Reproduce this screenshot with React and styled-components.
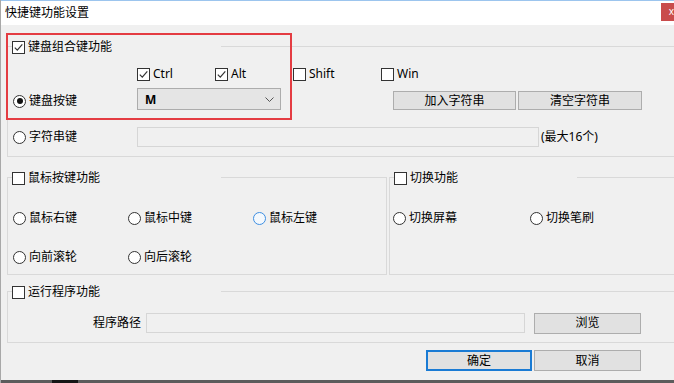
import React from "react";
import styled, { createGlobalStyle } from "styled-components";

const GlobalStyle = createGlobalStyle`
  html, body {
    margin: 0;
    padding: 0;
    background: #f0f0f0;
  }
  body {
    width: 674px;
    height: 383px;
    overflow: hidden;
    font-family: "Noto Sans", "Noto Sans CJK SC", sans-serif;
  }
`;

export default function App() {
	return (
		<>
			<GlobalStyle />
			<Window>
				<TitleBar>
					<Title>快捷键功能设置</Title>
					<CloseButton>x</CloseButton>
				</TitleBar>
				<Body>
					<Group $w="680px" $pad="0 0 9px 5px">
						<Legend $w="209px">
							<Check checked>键盘组合键功能</Check>
						</Legend>
						<Row $mt="17px" $h="20px">
							<Cell $w="124px" />
							<Cell $w="78px">
								<Check checked>Ctrl</Check>
							</Cell>
							<Cell $w="78px">
								<Check checked>Alt</Check>
							</Cell>
							<Cell $w="88px">
								<Check>Shift</Check>
							</Cell>
							<Cell>
								<Check>Win</Check>
							</Cell>
						</Row>
						<Row $mt="4px" $h="22px">
							<Cell $w="124px" $down>
								<Radio checked>键盘按键</Radio>
							</Cell>
							<Combo>
								<span>M</span>
								<svg width="9" height="5" viewBox="0 0 9 5">
									<polyline points="0.5,0.5 4.5,4.5 8.5,0.5" fill="none" stroke="#555" strokeWidth="1" />
								</svg>
							</Combo>
							<Button $w="123px" $h="19px" $ml="112px" $bottom>
								加入字符串
							</Button>
							<Button $w="124px" $h="19px" $ml="2px" $bottom>
								清空字符串
							</Button>
						</Row>
						<Row $mt="17px" $h="20px">
							<Cell $w="124px">
								<Radio>字符串键</Radio>
							</Cell>
							<TextField $w="402px" />
							<Note>(最大16个)</Note>
						</Row>
					</Group>

					<GroupRow>
						<Group $w="380px" $pad="0 0 7px 5px">
							<Legend $w="209px">
								<Check>鼠标按键功能</Check>
							</Legend>
							<Row $mt="30px" $h="20px">
								<Cell $w="115px">
									<Radio>鼠标右键</Radio>
								</Cell>
								<Cell $w="125px">
									<Radio>鼠标中键</Radio>
								</Cell>
								<Cell>
									<Radio hover>鼠标左键</Radio>
								</Cell>
							</Row>
							<Row $mt="19px" $h="20px">
								<Cell $w="115px">
									<Radio>向前滚轮</Radio>
								</Cell>
								<Cell $w="125px">
									<Radio>向后滚轮</Radio>
								</Cell>
							</Row>
						</Group>
						<Group $w="300px" $pad="0 0 7px 3px">
							<Legend $w="183px">
								<Check>切换功能</Check>
							</Legend>
							<Row $mt="30px" $h="20px">
								<Cell $w="137px">
									<Radio>切换屏幕</Radio>
								</Cell>
								<Cell>
									<Radio>切换笔刷</Radio>
								</Cell>
							</Row>
						</Group>
					</GroupRow>

					<Group $w="680px" $pad="0 0 8px 5px" $mt="16px">
						<Legend $w="209px">
							<Check>运行程序功能</Check>
						</Legend>
						<Row $mt="20px" $h="22px">
							<FieldLabel>程序路径</FieldLabel>
							<TextField $w="379px" />
							<Button $w="107px" $h="21px" $ml="9px">
								浏览
							</Button>
						</Row>
					</Group>

					<Footer>
						<Button $w="106px" $h="21px" $primary>
							确定
						</Button>
						<Button $w="107px" $h="21px" $ml="2px">
							取消
						</Button>
					</Footer>
				</Body>
				<BottomEdge>
					<TaskChunk />
				</BottomEdge>
				<Highlight />
			</Window>
		</>
	);
}

function Check({ checked, children }) {
	return (
		<Label>
			<Box>
				{checked && (
					<svg width="11" height="11" viewBox="0 0 11 11">
						<polyline points="1.8,5.6 4.3,8.2 9.3,2.4" fill="none" stroke="#333" strokeWidth="1.2" />
					</svg>
				)}
			</Box>
			<span>{children}</span>
		</Label>
	);
}

function Radio({ checked, hover, children }) {
	return (
		<Label>
			<Circle $hover={hover}>{checked && <Dot />}</Circle>
			<span>{children}</span>
		</Label>
	);
}

const Window = styled.div`
	position: relative;
	width: 674px;
	height: 383px;
	box-sizing: border-box;
	display: flex;
	flex-direction: column;
	background: #f0f0f0;
	border-left: 1px solid #a8a8a8;
	overflow: hidden;
	color: #000;
`;

const TitleBar = styled.div`
	height: 25px;
	flex-shrink: 0;
	box-sizing: border-box;
	display: flex;
	align-items: flex-start;
	background: #fff;
	border-top: 1px solid #9cc5ee;
	padding-left: 4px;
`;

const Title = styled.div`
	font-size: 12px;
	line-height: 16px;
	margin-top: 4px;
	white-space: nowrap;
`;

const CloseButton = styled.div`
	margin-left: auto;
	margin-top: 2px;
	margin-right: -8px;
	width: 21px;
	height: 18px;
	flex-shrink: 0;
	background: #c94c4c;
	color: #fff;
	font-size: 10px;
	line-height: 17px;
	text-align: center;
`;

const Body = styled.div`
	flex: 1;
	padding: 21px 0 0 6px;
	display: flex;
	flex-direction: column;
	align-items: flex-start;
`;

const Group = styled.div`
	position: relative;
	box-sizing: border-box;
	flex-shrink: 0;
	width: ${(p) => p.$w};
	margin-top: ${(p) => p.$mt || 0};
	padding: ${(p) => p.$pad};
	border: 1px solid #d9d9d9;
`;

const GroupRow = styled.div`
	display: flex;
	gap: 2px;
	margin-top: 20px;
	flex-shrink: 0;
`;

const Legend = styled.div`
	position: absolute;
	top: -9px;
	left: 4px;
	width: ${(p) => p.$w};
	height: 18px;
	display: flex;
	align-items: center;
	background: #f0f0f0;
`;

const Row = styled.div`
	display: flex;
	align-items: center;
	height: ${(p) => p.$h};
	margin-top: ${(p) => p.$mt};
`;

const Cell = styled.div`
	display: flex;
	align-items: center;
	flex-shrink: 0;
	width: ${(p) => p.$w || "auto"};
	margin-top: ${(p) => (p.$down ? "4px" : "0")};
`;

const Label = styled.label`
	display: inline-flex;
	align-items: center;
	gap: 3px;
	font-size: 12px;
	line-height: 16px;
	white-space: nowrap;
`;

const Box = styled.span`
	width: 13px;
	height: 13px;
	box-sizing: border-box;
	border: 1px solid #333;
	background: #fff;
	display: inline-flex;
	align-items: center;
	justify-content: center;
	flex-shrink: 0;
`;

const Circle = styled.span`
	width: 13px;
	height: 13px;
	box-sizing: border-box;
	border-radius: 50%;
	border: 1px solid ${(p) => (p.$hover ? "#3d8ee2" : "#333")};
	background: ${(p) => (p.$hover ? "#f3f8fd" : "#fff")};
	display: inline-flex;
	align-items: center;
	justify-content: center;
	flex-shrink: 0;
`;

const Dot = styled.span`
	width: 6px;
	height: 6px;
	border-radius: 50%;
	background: #111;
`;

const Combo = styled.div`
	width: 144px;
	height: 22px;
	box-sizing: border-box;
	flex-shrink: 0;
	display: flex;
	align-items: center;
	justify-content: space-between;
	padding: 0 6px 0 7px;
	background: #e5e5e5;
	border: 1px solid #acacac;
	font-size: 12px;
	font-weight: bold;
`;

const Button = styled.button`
	width: ${(p) => p.$w};
	height: ${(p) => p.$h};
	margin-left: ${(p) => p.$ml || 0};
	align-self: ${(p) => (p.$bottom ? "flex-end" : "center")};
	box-sizing: border-box;
	flex-shrink: 0;
	padding: 0;
	background: #e1e1e1;
	border: ${(p) => (p.$primary ? "2px solid #1a7bd4" : "1px solid #adadad")};
	font-family: "Noto Sans", "Noto Sans CJK SC", sans-serif;
	font-size: 12px;
	line-height: 16px;
	color: #000;
`;

const TextField = styled.div`
	width: ${(p) => p.$w};
	height: 20px;
	box-sizing: border-box;
	flex-shrink: 0;
	background: #f0f0f0;
	border: 1px solid #d6d6d6;
`;

const Note = styled.span`
	margin-left: 2px;
	font-size: 12px;
	line-height: 16px;
	white-space: nowrap;
`;

const FieldLabel = styled.span`
	width: 133px;
	box-sizing: border-box;
	padding-right: 5px;
	text-align: right;
	font-size: 12px;
	line-height: 16px;
	flex-shrink: 0;
`;

const Footer = styled.div`
	display: flex;
	margin-top: 7px;
	padding-left: 419px;
`;

const BottomEdge = styled.div`
	height: 3px;
	flex-shrink: 0;
	background: #5c5c5c;
	display: flex;
`;

const TaskChunk = styled.div`
	margin-left: 51px;
	width: 26px;
	background: #151515;
`;

const Highlight = styled.div`
	position: absolute;
	left: 5px;
	top: 33px;
	width: 286px;
	height: 87px;
	box-sizing: border-box;
	border: 2px solid #e43c42;
	pointer-events: none;
`;
